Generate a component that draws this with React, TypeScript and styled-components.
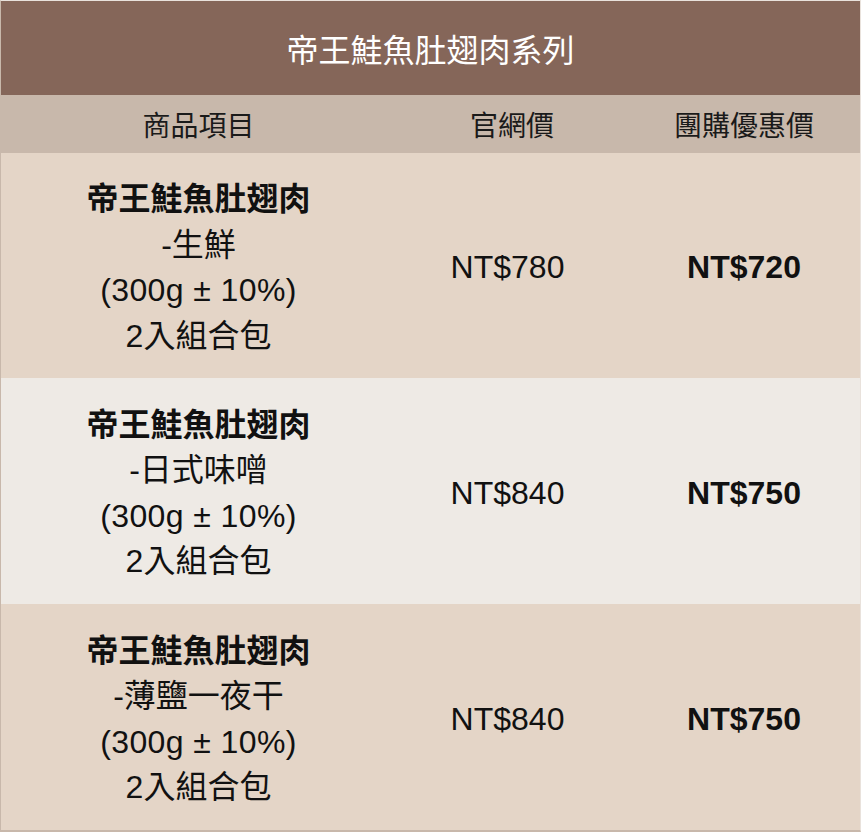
import React, { ReactElement } from 'react'
import styled, { createGlobalStyle } from 'styled-components'

const GlobalStyle = createGlobalStyle`
  html, body {
    margin: 0;
    padding: 0;
    background: #ffffff;
  }
  body {
    font-family: "Liberation Sans", "Noto Sans CJK TC", sans-serif;
  }
`;

const Wrapper = styled.div`
  width: 861px;
  box-sizing: border-box;
  border-top: 1px solid #e9e2dc;
  border-left: 1px solid #c8b8ab;
  border-right: 1px solid #e9e2dc;
  border-bottom: 2px solid #c8b8ab;
`;

const Title = styled.div`
  height: 94px;
  background-color: #856659;
  color: #ffffff;
  font-size: 32px;
  display: flex;
  align-items: center;
  justify-content: center;
`;

const Grid = styled.div`
  display: grid;
  grid-template-columns: 395px 232px 1fr;
`;

const HeadCell = styled.div`
  height: 58px;
  background-color: #c8b8ab;
  color: #1a1a1a;
  font-size: 28px;
  display: flex;
  align-items: center;
  justify-content: center;
`;

const Cell = styled.div<{ $alt?: boolean; $bold?: boolean; $h: number; $shift?: number }>`
  box-sizing: border-box;
  height: ${p => p.$h}px;
  padding-top: 5px;
  padding-right: ${p => p.$shift ?? 0}px;
  background-color: ${p => (p.$alt ? '#eeeae5' : '#e4d5c7')};
  color: #111111;
  font-size: 32px;
  font-weight: ${p => (p.$bold ? 700 : 400)};
  display: flex;
  flex-direction: column;
  align-items: center;
  justify-content: center;
  text-align: center;
  line-height: 45.5px;
`;

const Name = styled.span`
  font-weight: 700;
`;

const Weight = styled.span`
  letter-spacing: 0.4px;
`;

interface Item {
  flavor: string
  web: string
  group: string
}

const items: Item[] = [
  { flavor: '-生鮮', web: 'NT$780', group: 'NT$720' },
  { flavor: '-日式味噌', web: 'NT$840', group: 'NT$750' },
  { flavor: '-薄鹽一夜干', web: 'NT$840', group: 'NT$750' },
];

export default function App(): ReactElement {
  return (
    <>
      <GlobalStyle />
      <Wrapper>
        <Title>帝王鮭魚肚翅肉系列</Title>
        <Grid>
          <HeadCell>商品項目</HeadCell>
          <HeadCell>官網價</HeadCell>
          <HeadCell>團購優惠價</HeadCell>
          {items.map((it, i) => {
            const alt = i % 2 === 1
            const h = i === 0 ? 225 : 226
            return (
              <React.Fragment key={i}>
                <Cell $alt={alt} $h={h}>
                  <Name>帝王鮭魚肚翅肉</Name>
                  <span>{it.flavor}</span>
                  <Weight>(300g ± 10%)</Weight>
                  <span>2入組合包</span>
                </Cell>
                <Cell $alt={alt} $h={h} $shift={9}>{it.web}</Cell>
                <Cell $alt={alt} $h={h} $bold>{it.group}</Cell>
              </React.Fragment>
            )
          })}
        </Grid>
      </Wrapper>
    </>
  )
}
